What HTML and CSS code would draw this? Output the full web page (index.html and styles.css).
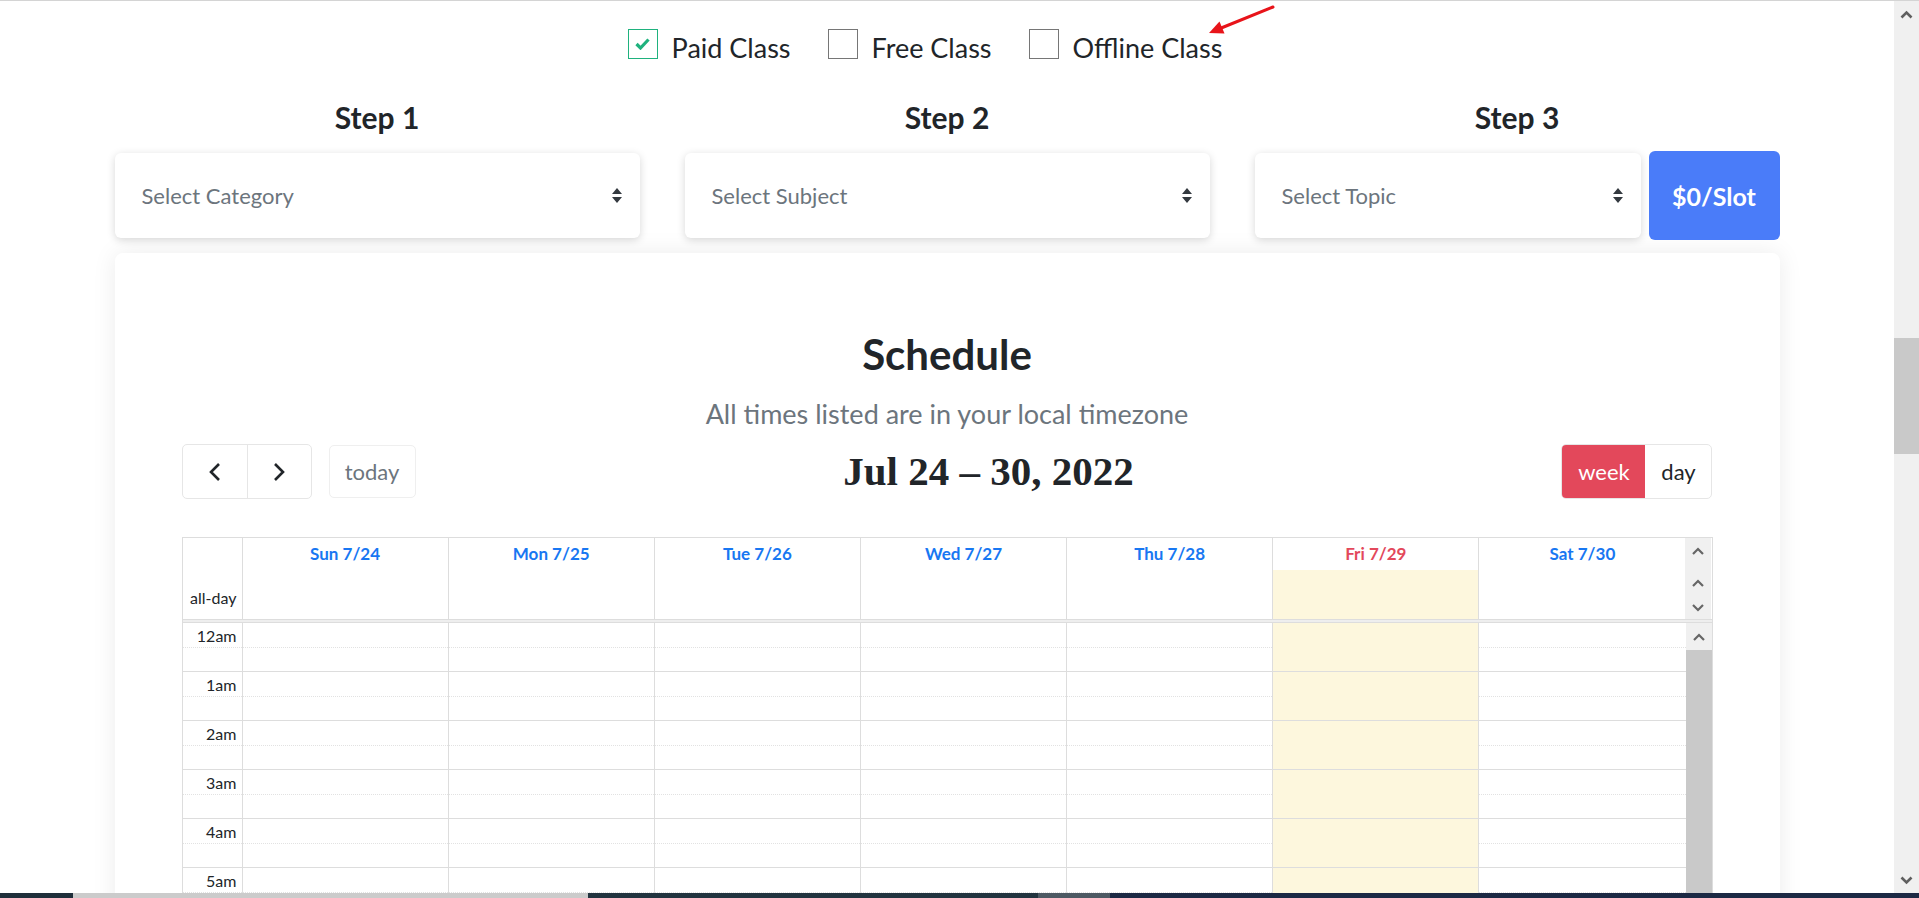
FILE: index.html
```html
<!DOCTYPE html>
<html lang="en">
<head>
    <meta charset="UTF-8">
    <meta name="viewport" content="width=device-width, initial-scale=1.0">
    <title>Schedule a Class</title>
    <link rel="stylesheet" href="styles.css">
</head>
<body>
    <div class="screen">
        <div class="page">
            <div class="content">
                <svg class="annotation" width="90" height="45" viewBox="0 0 90 45">
                    <line x1="73" y1="7" x2="20" y2="28.5" stroke="#e8141a" stroke-width="3" stroke-linecap="round"/>
                    <polygon points="9,33 24.5,33.5 19.5,21.5" fill="#e8141a"/>
                </svg>
                <div class="wrap">
                    <div class="class-types">
                        <label class="check-item">
                            <span class="check-box checked">
                                <svg width="15" height="12" viewBox="0 0 15 12"><path d="M1.5 6 L5.5 10 L13.5 1.5" fill="none" stroke="#1fb27e" stroke-width="3.2"/></svg>
                            </span>
                            <span class="check-text">Paid Class</span>
                        </label>
                        <label class="check-item">
                            <span class="check-box"></span>
                            <span class="check-text">Free Class</span>
                        </label>
                        <label class="check-item">
                            <span class="check-box"></span>
                            <span class="check-text">Offline Class</span>
                        </label>
                    </div>

                    <div class="steps">
                        <div class="step">
                            <h3 class="step-title">Step 1</h3>
                            <div class="step-row">
                                <div class="select-box">
                                    <span>Select Category</span>
                                    <svg class="sort-icon" width="10" height="15" viewBox="0 0 10 15"><path d="M5 0 L10 6 H0 Z M0 9 H10 L5 15 Z" fill="#343a40"/></svg>
                                </div>
                            </div>
                        </div>
                        <div class="step">
                            <h3 class="step-title">Step 2</h3>
                            <div class="step-row">
                                <div class="select-box">
                                    <span>Select Subject</span>
                                    <svg class="sort-icon" width="10" height="15" viewBox="0 0 10 15"><path d="M5 0 L10 6 H0 Z M0 9 H10 L5 15 Z" fill="#343a40"/></svg>
                                </div>
                            </div>
                        </div>
                        <div class="step">
                            <h3 class="step-title">Step 3</h3>
                            <div class="step-row">
                                <div class="select-box">
                                    <span>Select Topic</span>
                                    <svg class="sort-icon" width="10" height="15" viewBox="0 0 10 15"><path d="M5 0 L10 6 H0 Z M0 9 H10 L5 15 Z" fill="#343a40"/></svg>
                                </div>
                                <div class="price-btn">$0/Slot</div>
                            </div>
                        </div>
                    </div>

                    <div class="schedule-card">
                        <h2 class="schedule-title">Schedule</h2>
                        <p class="schedule-note">All times listed are in your local timezone</p>

                        <div class="cal-toolbar">
                            <div class="toolbar-chunk">
                                <div class="btn-group">
                                    <div class="nav-btn">
                                        <svg width="12" height="20" viewBox="0 0 12 20"><polyline points="10,2 2,10 10,18" fill="none" stroke="#212529" stroke-width="2.6"/></svg>
                                    </div>
                                    <div class="nav-btn">
                                        <svg width="12" height="20" viewBox="0 0 12 20"><polyline points="2,2 10,10 2,18" fill="none" stroke="#212529" stroke-width="2.6"/></svg>
                                    </div>
                                </div>
                                <div class="today-btn">today</div>
                            </div>
                            <h2 class="cal-title">Jul 24 – 30, 2022</h2>
                            <div class="btn-group">
                                <div class="view-btn active">week</div>
                                <div class="view-btn">day</div>
                            </div>
                        </div>

                        <div class="cal-grid">
                            <div class="cal-head" id="calHead"></div>
                            <div class="cal-divider"></div>
                            <div class="cal-body">
                                <div class="time-grid" id="timeGrid"></div>
                                <div class="body-scroll">
                                    <div class="body-scroll-btn">
                                        <svg width="12" height="8" viewBox="0 0 12 8"><polyline points="1,7 6,2 11,7" fill="none" stroke="#666" stroke-width="2.2"/></svg>
                                    </div>
                                    <div class="body-scroll-thumb"></div>
                                </div>
                            </div>
                        </div>
                    </div>
                </div>
            </div>
            <div class="page-scrollbar">
                <div class="page-scroll-btn">
                    <svg width="13" height="9" viewBox="0 0 13 9"><polyline points="1.5,7.5 6.5,2.5 11.5,7.5" fill="none" stroke="#5f5f5f" stroke-width="2.6"/></svg>
                </div>
                <div class="page-scroll-gap"></div>
                <div class="page-scroll-thumb"></div>
                <div class="page-scroll-track"></div>
                <div class="page-scroll-btn">
                    <svg width="13" height="9" viewBox="0 0 13 9"><polyline points="1.5,1.5 6.5,6.5 11.5,1.5" fill="none" stroke="#5f5f5f" stroke-width="2.6"/></svg>
                </div>
            </div>
        </div>
        <div class="taskbar">
            <span class="tb-a"></span>
            <span class="tb-b"></span>
            <span class="tb-c"></span>
            <span class="tb-d"></span>
            <span class="tb-e"></span>
        </div>
    </div>
    <script>
        const days = ['Sun 7/24', 'Mon 7/25', 'Tue 7/26', 'Wed 7/27', 'Thu 7/28', 'Fri 7/29', 'Sat 7/30'];
        const todayIndex = 5;
        const chevron = (pts) => `<svg width="12" height="8" viewBox="0 0 12 8"><polyline points="${pts}" fill="none" stroke="#666" stroke-width="2.2"/></svg>`;

        function renderHead() {
            let html = '<div class="head-axis"><span>all-day</span></div>';
            days.forEach((day, i) => {
                const today = i === todayIndex ? ' today' : '';
                html += `
                    <div class="head-day${today}">
                        <div class="day-label">${day}</div>
                        <div class="day-allday"></div>
                    </div>`;
            });
            html += `
                <div class="head-scroll">
                    ${chevron('1,7 6,2 11,7')}
                    ${chevron('1,7 6,2 11,7')}
                    ${chevron('1,1 6,6 11,1')}
                </div>`;
            document.getElementById('calHead').innerHTML = html;
        }

        function renderSlots() {
            let html = '';
            for (let h = 0; h < 7; h++) {
                const label = (h === 0 ? 12 : h) + 'am';
                for (let half = 0; half < 2; half++) {
                    html += `<div class="slot${half ? ' hour-end' : ''}">`;
                    html += `<div class="slot-axis">${half ? '' : label}</div>`;
                    days.forEach((d, i) => {
                        html += `<div class="slot-cell${i === todayIndex ? ' today' : ''}"></div>`;
                    });
                    html += '</div>';
                }
            }
            document.getElementById('timeGrid').innerHTML = html;
        }

        renderHead();
        renderSlots();
    </script>
</body>
</html>
```

FILE: styles.css
```css
* {
    box-sizing: border-box;
}
html, body {
    margin: 0;
    height: 100%;
}
body {
    font-family: Lato, 'Noto Sans', sans-serif;
    color: #212529;
    background: #fff;
    overflow: hidden;
}
.screen {
    height: 898px;
    display: flex;
    flex-direction: column;
    border-top: 1px solid #d4d4d4;
}
.page {
    flex: 1;
    display: flex;
    min-height: 0;
}
.content {
    flex: 1;
    position: relative;
    overflow: hidden;
}
.annotation {
    position: absolute;
    left: 1200px;
    top: -1px;
}
.wrap {
    width: 1665px;
    margin: 0 auto;
}

/* class type checkboxes */
.class-types {
    display: flex;
    justify-content: center;
    padding-top: 28px;
}
.check-item {
    display: flex;
    align-items: flex-start;
    height: 34px;
    margin-right: 37px;
}
.check-item:last-child {
    margin-right: 44px;
}
.check-box {
    width: 30px;
    height: 30px;
    margin-right: 14px;
    border: 1.5px solid #767676;
    display: flex;
    align-items: center;
    justify-content: center;
}
.check-box.checked {
    border-color: #1fb27e;
}
.check-text {
    padding-top: 4px;
    font-size: 27px;
    line-height: 30px;
}

/* steps */
.steps {
    display: grid;
    grid-template-columns: repeat(3, 1fr);
    column-gap: 45px;
    margin-top: 36px;
}
.step-title {
    margin: 0 0 16px;
    text-align: center;
    font-size: 30px;
    line-height: 36px;
    font-weight: 700;
}
.step-row {
    display: flex;
    align-items: center;
    gap: 8px;
    height: 89px;
}
.select-box {
    flex: 1;
    height: 85px;
    padding: 0 18px 0 27px;
    background: #fff;
    border-radius: 6px;
    box-shadow: 0 2px 8px rgba(0, 0, 0, 0.16);
    display: flex;
    align-items: center;
    justify-content: space-between;
    font-size: 22px;
    color: #6c757d;
}
.price-btn {
    width: 131px;
    height: 89px;
    background: #4a7cf9;
    color: #fff;
    border-radius: 6px;
    font-size: 25px;
    font-weight: 700;
    display: flex;
    align-items: center;
    justify-content: center;
}

/* schedule card */
.schedule-card {
    margin-top: 13px;
    padding: 77px 67px 40px;
    background: #fff;
    border-radius: 8px;
    box-shadow: 0 0 24px rgba(0, 0, 0, 0.08);
}
.schedule-title {
    margin: 0;
    text-align: center;
    font-size: 42px;
    line-height: 48px;
    font-weight: 700;
}
.schedule-note {
    margin: 21px 0 0;
    text-align: center;
    font-size: 27px;
    line-height: 30px;
    color: #6c757d;
}
.cal-toolbar {
    margin-top: 15px;
    height: 55px;
    display: flex;
    justify-content: space-between;
    align-items: center;
}
.toolbar-chunk {
    display: flex;
    align-items: center;
}
.btn-group {
    display: flex;
    height: 55px;
    border: 1px solid #e6e6e6;
    border-radius: 5px;
    overflow: hidden;
}
.nav-btn {
    width: 64px;
    display: flex;
    align-items: center;
    justify-content: center;
}
.nav-btn + .nav-btn {
    border-left: 1px solid #e6e6e6;
}
.today-btn {
    width: 87px;
    height: 53px;
    margin-left: 17px;
    border: 1px solid #efefef;
    border-radius: 5px;
    display: flex;
    align-items: center;
    justify-content: center;
    font-size: 22px;
    color: #6c757d;
}
.cal-title {
    margin: 0;
    font-family: 'Liberation Serif', serif;
    font-size: 41px;
    font-weight: 700;
    line-height: 55px;
}
.view-btn {
    display: flex;
    align-items: center;
    justify-content: center;
    width: 66px;
    font-size: 22px;
}
.view-btn.active {
    width: 83px;
    background: #e3485b;
    color: #fff;
}

/* calendar grid */
.cal-grid {
    margin-top: 38px;
    border: 1px solid #ddd;
}
.cal-head {
    display: grid;
    grid-template-columns: 60px repeat(7, 1fr) 26px;
}
.head-axis {
    border-right: 1px solid #ddd;
    display: flex;
    align-items: flex-end;
    justify-content: flex-end;
    padding: 0 5px 12px 0;
    font-size: 16px;
}
.head-day {
    border-right: 1px solid #ddd;
}
.head-day:nth-child(8) {
    border-right: none;
}
.day-label {
    height: 32px;
    line-height: 31px;
    text-align: center;
    font-size: 17px;
    font-weight: 700;
    color: #1877f2;
}
.head-day.today .day-label {
    color: #e3485b;
}
.day-allday {
    height: 49px;
}
.head-day.today .day-allday {
    background: #fdf7dd;
}
.head-scroll {
    background: #f0f0f0;
    display: flex;
    flex-direction: column;
    align-items: center;
    padding-top: 9px;
    gap: 24px;
}
.head-scroll svg:last-child {
    margin-top: -7px;
}
.cal-divider {
    height: 4px;
    background: #eee;
    border-top: 1px solid #ddd;
    border-bottom: 1px solid #ddd;
}
.cal-body {
    display: flex;
}
.time-grid {
    flex: 1;
}
.slot {
    display: grid;
    grid-template-columns: 60px repeat(7, 1fr);
    height: 24.5px;
    border-bottom: 1px dotted #e2e2e2;
}
.slot.hour-end {
    border-bottom: 1px solid #ddd;
}
.slot-axis {
    border-right: 1px solid #ddd;
    padding-right: 5px;
    text-align: right;
    font-size: 16px;
    line-height: 26px;
}
.slot-cell {
    border-right: 1px solid #ddd;
}
.slot-cell:last-child {
    border-right: none;
}
.slot-cell.today {
    background: #fdf7dd;
}
.body-scroll {
    width: 26px;
    display: flex;
    flex-direction: column;
}
.body-scroll-btn {
    height: 27px;
    background: #f0f0f0;
    display: flex;
    align-items: center;
    justify-content: center;
}
.body-scroll-thumb {
    flex: 1;
    background: #c9c9c9;
}

/* window chrome */
.page-scrollbar {
    width: 25px;
    background: #f0f0f0;
    display: flex;
    flex-direction: column;
}
.page-scroll-btn {
    height: 26px;
    display: flex;
    align-items: center;
    justify-content: center;
}
.page-scroll-gap {
    height: 311px;
}
.page-scroll-thumb {
    height: 116px;
    background: #c9c9c9;
}
.page-scroll-track {
    flex: 1;
}
.taskbar {
    height: 5px;
    display: flex;
}
.taskbar span {
    height: 100%;
}
.tb-a {
    width: 73px;
    background: #1f2f3a;
}
.tb-b {
    width: 515px;
    background: #cbcbcb;
}
.tb-c {
    width: 450px;
    background: #22343f;
}
.tb-d {
    width: 72px;
    background: #4d5963;
}
.tb-e {
    flex: 1;
    background: #1c2944;
}
```
